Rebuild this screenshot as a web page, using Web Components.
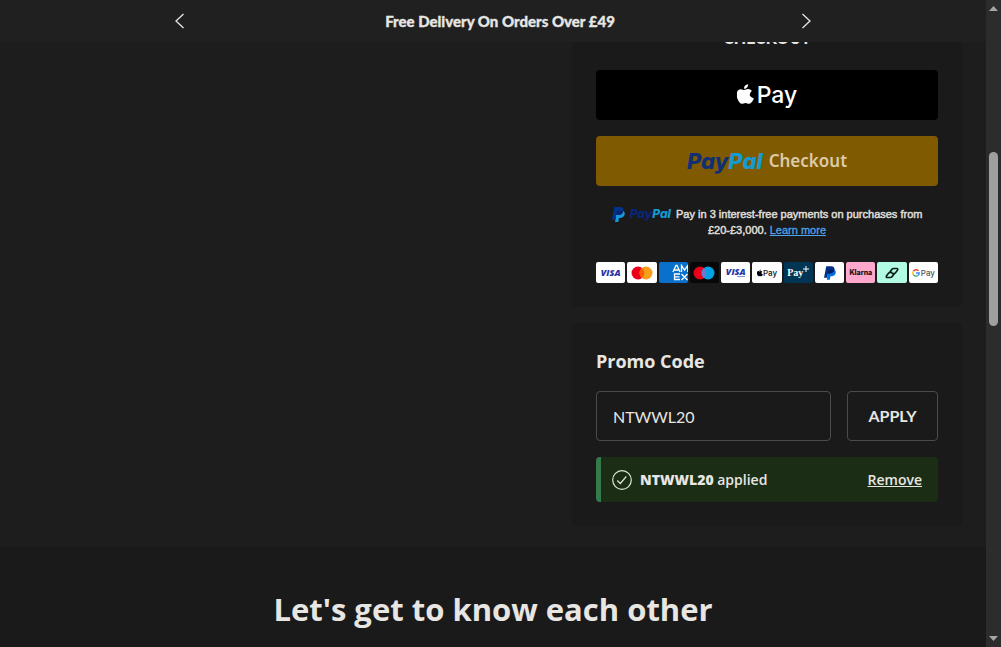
<!DOCTYPE html>
<html lang="en">
<head>
<meta charset="utf-8">
<meta name="viewport" content="width=device-width, initial-scale=1">
<title>Basket</title>
<style>
  html, body { margin: 0; height: 100%; }
  body {
    background: #1d1d1d; color: #e8e6e3; overflow: hidden;
    font-family: Lato, "Open Sans", sans-serif;
  }
</style>
</head>
<body>
<basket-page></basket-page>

<script>
const define = (name, html) => {
  const template = document.createElement('template');
  template.innerHTML = html;
  customElements.define(name, class extends HTMLElement {
    constructor() {
      super();
      this.attachShadow({ mode: 'open' }).append(template.content.cloneNode(true));
    }
  });
};

define('promo-banner', `
<style>
  :host { display: grid; grid-template-columns: 24px 1fr 24px; align-items: center; height: 42px;
    box-sizing: border-box; background: #202020; padding: 0 168px; position: relative; z-index: 2; }
  button { all: unset; cursor: pointer; display: flex; width: 24px; height: 24px; align-items: center; justify-content: center; }
  svg { width: 10px; height: 16px; fill: none; stroke: #e8e6e3; stroke-width: 1.3; }
  p { margin: 0; padding-left: 14px; text-align: center; font: 900 15px/20px Lato, sans-serif; -webkit-text-stroke: .3px; }
</style>
<button aria-label="Previous"><svg viewBox="0 0 10 16"><path d="M8.500 1 1 8l7.500 7"/></svg></button>
<p><slot></slot></p>
<button aria-label="Next"><svg viewBox="0 0 10 16"><path d="M1.500 1 9 8l-7.500 7"/></svg></button>`);

define('panel-card', `
<style>
  :host { display: block; background: #1a1a1a; border-radius: 4px; padding: 24px; }
</style><slot></slot>`);

define('paypal-word', `
<style>
  :host { display: inline-block; font-family: Inter, sans-serif; font-weight: 800; font-style: italic; white-space: nowrap; }
  .a { color: var(--pay, #122f73); } .b { color: var(--pal, #159bd0); }
</style><span class="a">Pay</span><span class="b">Pal</span>`);

define('paypal-mark', `
<style>
  :host { display: inline-block; } svg { display: block; width: 100%; height: 100%; }
  .p1 { fill: var(--m1, #00348c); } .p2 { fill: var(--m2, #1597dc); } .p3 { fill: var(--m3, #08236b); }
</style>
<svg viewBox="0 0 14 16" aria-hidden="true">
  <path class="p2" d="M5 4h6.300c2 .6 2.800 2 2.300 4-.6 2.600-2.500 3.700-5 3.700H7.500L6.800 16H3.300z"/>
  <path class="p1" d="M2.600 0h5.700c3 0 4.500 1.500 3.800 4.400C11.500 7.300 9.500 8.500 6.700 8.500H4.500L3.600 13.500H0z"/>
  <path class="p3" d="M5.300 4h6.800c-.5 3-2.500 4.500-5.400 4.500H4.500z"/>
</svg>`);

define('pay-badges', `
<style>
  :host { display: block; }
  ul { display: grid; grid-template-columns: repeat(11, minmax(0, 1fr)); gap: 2px; list-style: none; margin: 0; padding: 0; }
  li { height: 21px; border-radius: 2px; background: #fff; overflow: hidden; display: flex; align-items: center;
    justify-content: center; font: 700 8px/8px "Open Sans", sans-serif; color: #111; white-space: nowrap; }
  svg { display: block; flex: none; }
  .visa { font-weight: 800; font-style: italic; font-size: 9px; color: #2734a8; }
  .debit { flex-direction: column; align-items: center; }
  .debit i { width: 8px; height: 1px; background: #8991cf; margin-left: 10px; }
  .amex { background: #0b70cc; color: #fff; justify-content: flex-end; }
  .maestro { background: #080808; }
  .payplus { background: #003553; color: #fff; font: 700 10px/10px "Liberation Serif", serif; }
  .payplus svg { margin-top: -7px; }
  .klarna { background: #ffa8cd; font: 800 7px/8px Inter, sans-serif; }
  .clear { background: #b2fce4; }
  .apple, .google { font: 500 8px/8px Inter, sans-serif; }
  .google { color: #555; gap: 1px; }
  paypal-mark { width: 12px; height: 14px; --m1: #003087; --m2: #0070e0; --m3: #001c64; }
</style>
<ul aria-label="Accepted payment methods">
  <li class="visa">VISA</li>
  <li><svg width="22" height="14" viewBox="0 0 22 14"><circle cx="7" cy="7" r="6.500" fill="#eb001b"/><circle cx="15" cy="7" r="6.500" fill="#f79e1b"/><path d="M11 1.900a6.500 6.500 0 0 1 0 10.200 6.500 6.500 0 0 1 0-10.200" fill="#ff5f00"/></svg></li>
  <li class="amex"><svg width="16" height="17" viewBox="0 0 16 17" fill="none" stroke="#fff" stroke-width="1.300" role="img" aria-label="Amex"><path d="M1 8 4 1.500h1L8 8M2.500 6h4M9.500 8V1.500L12.500 6l3.300-4.500V8M8 10H2.500v5.500H8M2.500 12.800h5M9.500 10l6 6M15.500 10l-6 6"/></svg></li>
  <li class="maestro"><svg width="22" height="14" viewBox="0 0 22 14"><circle cx="7" cy="7" r="6.500" fill="#eb001b"/><circle cx="15" cy="7" r="6.500" fill="#00a2e5"/><path d="M11 1.900a6.500 6.500 0 0 1 0 10.200 6.500 6.500 0 0 1 0-10.200" fill="#7375cf"/></svg></li>
  <li class="visa debit">VISA<i></i></li>
  <li class="apple"><svg width="6" height="8" viewBox="2 0 20 24"><path d="M17 12.500c0-3 2.500-4.400 2.600-4.500-1.400-2-3.600-2.300-4.400-2.400-1.900-.2-3.600 1.100-4.600 1.100s-2.400-1-4-1C1 6 0 13 3.500 19c1 1.700 2.500 4 4.200 4 1.600 0 2.300-1.100 4.300-1.100s2.500 1.100 4.300 1c1.800 0 3-1.600 4-3.200.9-1.300 1.300-2.600 1.500-3.300-2-.8-4.800-2-4.800-3.900M13.800 3.800C14.700 2.700 15.300 1.300 15.100 0c-3 .3-5.100 2.600-4.800 5.300 1.300.1 2.700-.6 3.500-1.500"/></svg>Pay</li>
  <li class="payplus">Pay<svg width="6" height="6" viewBox="0 0 6 6" stroke="#fff"><path d="M3 0v6M0 3h6"/></svg></li>
  <li><paypal-mark></paypal-mark></li>
  <li class="klarna">Klarna</li>
  <li class="clear"><svg width="14" height="12" viewBox="0 0 14 12" fill="none" stroke="#0a1a17" stroke-width="1.600" stroke-linejoin="round" stroke-linecap="round"><path d="M5.200 4.500 6.800 2.500Q7.600 1.500 8.800 1.500h2.700Q13.500 1.500 12.400 3.200L10.500 5.700Q9.800 6.600 8.600 6.600H7.200"/><path d="M8.800 7.500 7.200 9.500Q6.400 10.500 5.200 10.500H2.500Q.5 10.500 1.600 8.800L3.500 6.300Q4.200 5.400 5.400 5.400H6.800"/></svg></li>
  <li class="google"><svg width="8" height="8" viewBox="0 0 16 16" fill="none" stroke-width="2.600"><path d="M13 3.500A6.500 6.500 0 0 0 2.500 5" stroke="#ea4335"/><path d="M2.500 5a6.500 6.500 0 0 0 0 6" stroke="#fbbc04"/><path d="M2.500 11A6.500 6.500 0 0 0 12 13" stroke="#34a853"/><path d="M12 13c2-1.500 2.500-3 2.500-5H8" stroke="#4285f4"/></svg>Pay</li>
</ul>`);

define('express-pay', `
<style>
  :host { display: grid; gap: 16px; }
  h2 { margin: 0 0 8px; font: 900 16px/16px Lato, sans-serif; text-align: center; }
  button { all: unset; cursor: pointer; box-sizing: border-box; height: 50px; border-radius: 4px; display: flex;
    align-items: center; justify-content: center; }
  .apple { background: #000; color: #fff; font: 500 23px/32px Inter, sans-serif; gap: 3px; }
  .apple svg { margin-bottom: 2px; }
  .paypal { background: #805a00; color: #dccba9; gap: 6px; font: 600 17px/24px "Noto Sans", sans-serif; }
  .paypal paypal-word { font-size: 22px; }
  p { margin: 4px 0 0; text-align: center; font: 400 11px/16px "Liberation Sans", sans-serif; color: #dedbd6; padding: 0 12px; }
  span { -webkit-text-stroke: .5px; }
  p paypal-word { font-size: 12px; line-height: 14px; margin-right: 2px; --pay: #07267a; --pal: #139ad6; }
  p paypal-mark { width: 13px; height: 15px; vertical-align: -3px; margin: -1px 2px -1px 0; }
  a { color: #4fa3ea; -webkit-text-stroke: .3px; }
  pay-badges { margin-top: 8px; }
</style>
<h2>CHECKOUT</h2>
<button class="apple" aria-label="Apple Pay"><svg width="17" height="21" viewBox="2 0 20 24" fill="#fff"><path d="M17 12.500c0-3 2.500-4.400 2.600-4.500-1.400-2-3.600-2.300-4.400-2.400-1.900-.2-3.600 1.100-4.600 1.100s-2.400-1-4-1C1 6 0 13 3.500 19c1 1.700 2.500 4 4.200 4 1.600 0 2.300-1.100 4.300-1.100s2.500 1.100 4.300 1c1.800 0 3-1.600 4-3.200.9-1.300 1.300-2.600 1.500-3.300-2-.8-4.800-2-4.800-3.900M13.800 3.800C14.700 2.700 15.300 1.300 15.100 0c-3 .3-5.100 2.600-4.800 5.300 1.300.1 2.700-.6 3.500-1.500"/></svg>Pay</button>
<button class="paypal"><paypal-word></paypal-word>Checkout</button>
<p><paypal-mark></paypal-mark> <paypal-word></paypal-word> <span>Pay in 3 interest-free payments on purchases from</span> <span>£20-£3,000.</span> <a href="#">Learn more</a></p>
<pay-badges></pay-badges>`);

define('promo-code', `
<style>
  :host { display: block; }
  label { display: block; font: 700 18px/28px "Open Sans", sans-serif; margin-bottom: 16px; }
  form { display: flex; gap: 16px; margin: 0 0 16px; }
  input, form button { box-sizing: border-box; height: 50px; background: #1a1a1a; border: 1px solid #4b4b4b; border-radius: 4px; color: #e8e6e3; margin: 0; }
  input { flex: 1; min-width: 0; padding: 0 16px; font: 400 16px/24px Lato, sans-serif; outline: 0; }
  form button { width: 91px; padding: 0; font: 700 16px/24px Lato, sans-serif; }
  .applied { display: flex; align-items: center; gap: 8px; box-sizing: border-box; height: 45px; padding: 0 16px 0 11px;
    background: #1b2d15; border-left: 5px solid #347a4b; border-radius: 4px; font: 600 14px/20px "Open Sans", sans-serif; }
  .applied p { flex: 1; margin: 0; } b { font-weight: 800; }
  .applied button { all: unset; cursor: pointer; text-decoration: underline; }
</style>
<label for="code">Promo Code</label>
<form onsubmit="return false"><input id="code" value="NTWWL20"><button>APPLY</button></form>
<div class="applied" role="status">
  <svg width="20" height="20" viewBox="0 0 20 20" fill="none" stroke="#dce6d5" stroke-width="1.200" aria-hidden="true"><circle cx="10" cy="10" r="9.300"/><path d="m5.300 10.500 3 3 6-7"/></svg>
  <p><b>NTWWL20</b> applied</p>
  <button>Remove</button>
</div>`);

define('page-scrollbar', `
<style>
  :host { display: flex; flex-direction: column; align-items: center; width: 15px; box-sizing: border-box; background: #2c2c2c; padding: 6px 0; }
  svg { width: 9px; height: 5px; fill: #a5a5a5; }
  .track { flex: 1; width: 9px; display: grid; grid-template-rows: 141fr 174fr 310fr; }
  .thumb { grid-row: 2; background: #9f9f9f; border-radius: 5px; }
</style>
<svg viewBox="0 0 9 5"><path d="M0 5 4.500 0 9 5z"/></svg>
<div class="track"><div class="thumb"></div></div>
<svg viewBox="0 0 9 5"><path d="M0 0h9L4.500 5z"/></svg>`);

define('basket-page', `
<style>
  :host { display: flex; height: 100vh; overflow: hidden; }
  .view { flex: 1; min-width: 0; overflow: hidden; }
  main { display: grid; grid-template-columns: 1fr 390px; padding: 0 24px 21px; margin-top: -36px; }
  aside { grid-column: 2; display: grid; grid-template-columns: minmax(0, 1fr); gap: 16px; }
  section { background: #1a1a1a; min-height: 100vh; padding: 40px 24px; text-align: center; }
  h1 { margin: 0; font: 700 31px/44px "Open Sans", sans-serif; }
</style>
<div class="view">
  <promo-banner>Free Delivery On Orders Over £49</promo-banner>
  <main>
    <aside>
      <panel-card><express-pay></express-pay></panel-card>
      <panel-card><promo-code></promo-code></panel-card>
    </aside>
  </main>
  <section><h1>Let's get to know each other</h1></section>
</div>
<page-scrollbar></page-scrollbar>`);
</script>
</body>
</html>
